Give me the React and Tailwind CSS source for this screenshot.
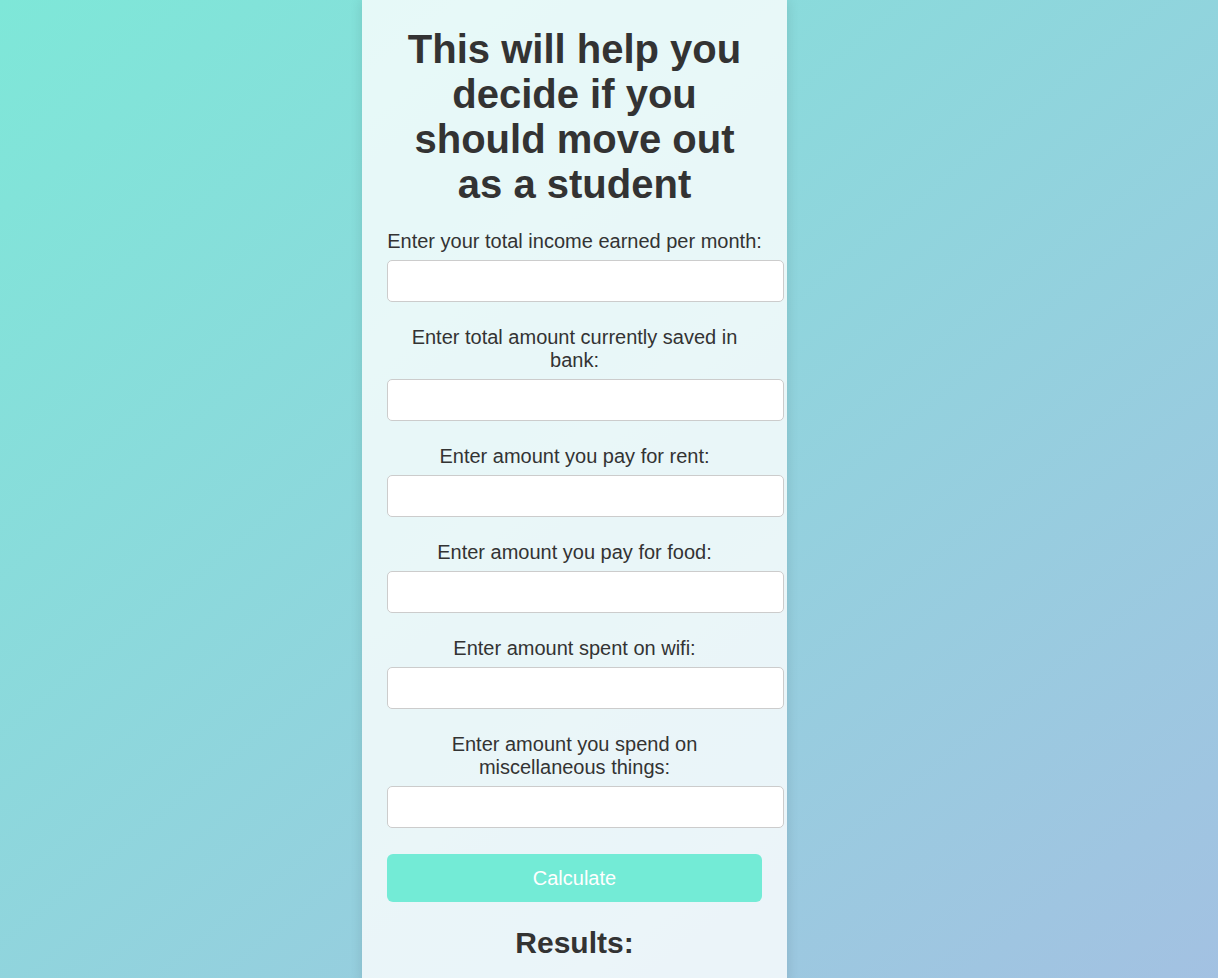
import React from "react";

const labels = [
  "Enter your total income earned per month:",
  "Enter total amount currently saved in bank:",
  "Enter amount you pay for rent:",
  "Enter amount you pay for food:",
  "Enter amount spent on wifi:",
  "Enter amount you spend on miscellaneous things:",
];

export default function App() {
  return (
    <div
      className="min-h-screen w-full flex bg-[linear-gradient(to_bottom_right,#7ee7d8,#a3c1e2)] text-[#333]"
      style={{ fontFamily: '"Liberation Sans", Arial, sans-serif' }}
    >
      <div className="ml-[362px] w-[425px] min-h-screen bg-white/80 px-[25px] pt-[27px] pb-[25px] shadow-[0_0_12px_rgba(0,0,0,0.12)]">
        <h1 className="text-[40px] font-bold leading-[45px] text-center mb-[23px]">
          This will help you decide if you should move out as a student
        </h1>
        <form className="flex flex-col" onSubmit={(e) => e.preventDefault()}>
          {labels.map((l) => (
            <div key={l} className="flex flex-col mb-[24px]">
              <label className="text-[20px] leading-[23px] text-center mb-[7px]">{l}</label>
              <input
                type="text"
                className="w-[397px] h-[42px] bg-white border border-[#ccc] rounded-[5px] px-[10px] outline-none"
              />
            </div>
          ))}
          <button
            type="submit"
            className="mt-[2px] w-full h-[48px] bg-[#73ebd6] text-white text-[20px] rounded-[6px]"
          >
            Calculate
          </button>
        </form>
        <h2 className="text-[30px] font-bold leading-[34px] text-center mt-[24px]">Results:</h2>
      </div>
    </div>
  );
}
